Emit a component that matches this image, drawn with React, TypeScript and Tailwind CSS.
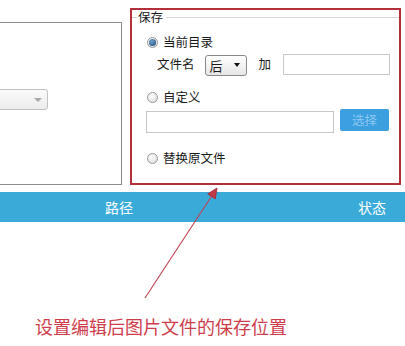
import React from "react";

const font = { fontFamily: '"Noto Sans CJK SC", "Noto Sans", sans-serif' };

function Radio({ checked }: { checked?: boolean }) {
  return (
    <div className="w-[11px] h-[11px] rounded-full border border-[#9a9a9a] bg-[radial-gradient(circle_at_40%_35%,#ffffff,#d6d6d6)] flex items-center justify-center shrink-0">
      {checked && (
        <div className="w-[7px] h-[7px] rounded-full bg-[radial-gradient(circle_at_40%_35%,#6fa4d0,#1a4675)]" />
      )}
    </div>
  );
}

export default function App() {
  return (
    <div
      className="relative w-[405px] h-[346px] overflow-hidden bg-white text-[#1a1a1a]"
      style={font}
    >
      <div className="flex h-[192px] items-start">
        {/* left panel */}
        <div className="ml-[-10px] mt-[22px] w-[132px] h-[163px] border border-[#8c8c8c] shrink-0 overflow-hidden">
          <div className="mt-[66px] ml-[-21px] w-[78px] h-[21px] rounded-[3px] border border-[#c2c2c2] bg-[linear-gradient(#fafafa,#ececec)] flex items-center">
            <span className="ml-[8px] text-[12px] leading-none text-[#666]">置</span>
            <span className="ml-auto mr-[5px] w-0 h-0 border-l-[4px] border-r-[4px] border-t-[4px] border-l-transparent border-r-transparent border-t-[#a8a8a8]" />
          </div>
        </div>

        {/* red box */}
        <div className="ml-[8px] mt-[8px] w-[271px] h-[177px] border-2 border-[#b3303a] shrink-0 text-[12.5px] leading-none">
          <div className="flex items-center h-[14px]">
            <div className="w-[5px] h-px bg-[#cfcfcf]" />
            <span className="px-[1px]">保存</span>
            <div className="flex-1 h-px bg-[#d8d8d8] ml-[2px]" />
          </div>

          <div className="mt-[11px] h-[15px] flex items-center pl-[15px] gap-[5px]">
            <Radio checked />
            <span>当前目录</span>
          </div>

          <div className="mt-[4px] h-[21px] flex items-center pl-[25px]">
            <span>文件名</span>
            <div className="ml-[10px] w-[42px] h-[21px] mt-[1px] rounded-[3px] border border-[#8a8a8a] bg-[linear-gradient(#ffffff,#e6e6e6)] flex items-center">
              <span className="ml-[4px] text-[13px]">后</span>
              <span className="ml-auto mr-[6px] w-0 h-0 border-l-[3.5px] border-r-[3.5px] border-t-[4px] border-l-transparent border-r-transparent border-t-[#111]" />
            </div>
            <span className="ml-[12px]">加</span>
            <div className="ml-[12px] w-[107px] h-[21px] border border-[#c8c8c8] bg-white" />
          </div>

          <div className="mt-[15px] h-[15px] flex items-center pl-[15px] gap-[5px]">
            <Radio />
            <span>自定义</span>
          </div>

          <div className="mt-[4px] flex items-start pl-[14px]">
            <div className="mt-[2px] w-[188px] h-[22px] border border-[#c8c8c8] bg-white" />
            <div className="ml-[6px] w-[49px] h-[22px] rounded-[2px] bg-[#3b9fe0] flex items-center justify-center text-[#8ec8f1]">
              选择
            </div>
          </div>

          <div className="mt-[18px] h-[15px] flex items-center pl-[15px] gap-[5px]">
            <Radio />
            <span>替换原文件</span>
          </div>
        </div>
      </div>

      {/* blue bar */}
      <div className="h-[30px] bg-[#3aabd9] flex items-center text-white text-[14px] leading-none">
        <span className="ml-[105px]">路径</span>
        <span className="ml-auto mr-[19px]">状态</span>
      </div>

      {/* caption */}
      <div className="mt-[94px] ml-[35px] text-[18px] leading-[20px] text-[#cf3d4c]">
        设置编辑后图片文件的保存位置
      </div>

      {/* arrow */}
      <svg
        className="absolute left-0 top-0 pointer-events-none"
        width="405"
        height="346"
        viewBox="0 0 405 346"
      >
        <line x1="145" y1="298" x2="213" y2="194" stroke="#c0404e" strokeWidth="1.1" />
        <polygon
          points="217,188 215.3,198.9 207.7,193.9"
          fill="#c23a48"
          stroke="#9e2a36"
          strokeWidth="0.8"
          strokeLinejoin="round"
        />
      </svg>
    </div>
  );
}
